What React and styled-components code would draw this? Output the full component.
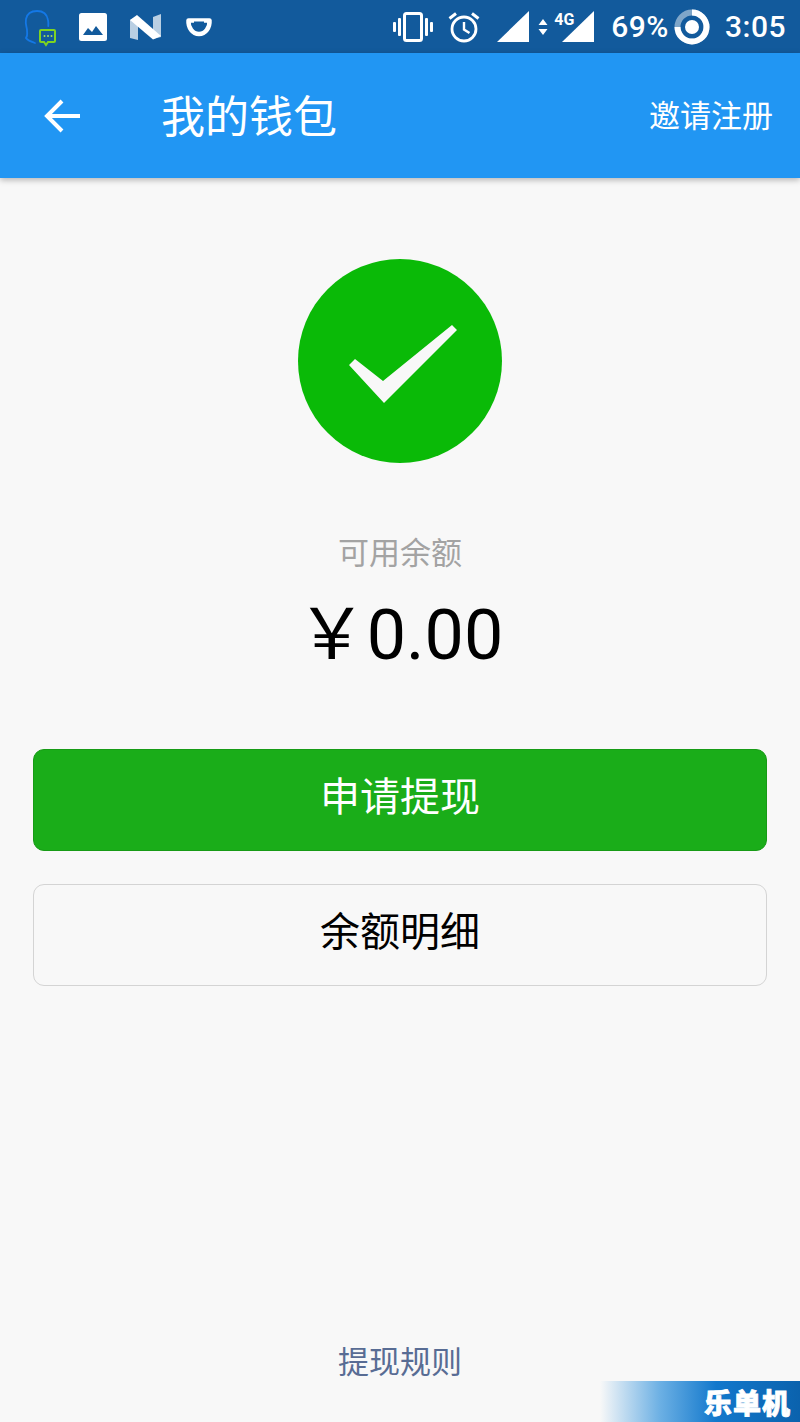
import React from "react";
import styled, { createGlobalStyle } from "styled-components";

const FONT = `Roboto, "Noto Sans CJK SC", sans-serif`;

const GlobalStyle = createGlobalStyle`
  html, body {
    margin: 0;
    padding: 0;
    background: #f8f8f8;
    font-family: ${FONT};
  }
`;

const QqIcon = () => (
  <svg width="38" height="48" viewBox="0 0 38 48" fill="none">
    <path
      d="M16 40c-3-1-8-3-9-5 2-2 1-5 1-8 0-3-2-5-1-11C8 11 12 8 18 8s10 3 11 9c.4 2 .5 3 .3 6"
      stroke="#1478e6"
      strokeWidth="1.8"
      strokeLinecap="round"
    />
    <path
      d="M22 27h13a1 1 0 0 1 1 1v10a1 1 0 0 1-1 1h-6l-2 3-2-3h-3a1 1 0 0 1-1-1V28a1 1 0 0 1 1-1z"
      fill="#125a9c"
      stroke="#7ed321"
      strokeWidth="2"
    />
    <circle cx="25.500" cy="33" r="1" fill="#a4e05a" />
    <circle cx="29" cy="33" r="1" fill="#a4e05a" />
    <circle cx="32.500" cy="33" r="1" fill="#a4e05a" />
  </svg>
);

const ImageIcon = () => (
  <svg width="28" height="28" viewBox="0 0 28 28">
    <rect width="28" height="28" rx="2.5" fill="#fff" />
    <path d="M4 22l5-7 4 4 4-6 7 9z" fill="#125a9c" />
  </svg>
);

const NougatIcon = () => (
  <svg width="34" height="26" viewBox="0 0 34 26">
    <path d="M1 6l8-4v24l-8-2z" fill="#b9cfe3" />
    <path d="M24 3l8-3v23l-8 2z" fill="#b9cfe3" />
    <path d="M1 6l7-5 24 21-8 3.500z" fill="#fff" />
  </svg>
);

const CupIcon = () => (
  <svg width="28" height="20" viewBox="0 0 28 20" fill="none">
    <path
      d="M3.500 3.500h21c.5 7-4 13.500-10.500 13.500S3 10.500 3.500 3.500z"
      stroke="#fff"
      strokeWidth="4.500"
      strokeLinejoin="round"
    />
    <path d="M9 5.500h10" stroke="#125a9c" strokeWidth="2" />
  </svg>
);

const VibrateIcon = () => (
  <svg width="40" height="30" viewBox="0 0 40 30" fill="#fff">
    <rect x="0" y="10" width="3" height="10" rx="1" />
    <rect x="5" y="6" width="3" height="18" rx="1" />
    <rect x="32" y="6" width="3" height="18" rx="1" />
    <rect x="37" y="10" width="3" height="10" rx="1" />
    <rect x="11.500" y="1.500" width="17" height="27" rx="2" fill="none" stroke="#fff" strokeWidth="3" />
  </svg>
);

const AlarmIcon = () => (
  <svg width="32" height="32" viewBox="0 0 32 32" fill="none" stroke="#fff" strokeWidth="2.800">
    <circle cx="16" cy="18" r="12" />
    <path d="M16 11v7.500l5.500 3.500" strokeWidth="2.400" />
    <path d="M1.500 7.500L8 2.500M30.500 7.500L24 2.500" strokeWidth="3" />
  </svg>
);

const SignalIcon = () => (
  <svg width="32" height="31" viewBox="0 0 32 31">
    <path d="M0 31L32 0v31z" fill="#fff" />
  </svg>
);

const ArrowsIcon = () => (
  <svg width="10" height="16" viewBox="0 0 10 16" fill="#fff">
    <path d="M5 0l4.500 6h-9zM5 16l4.500-6h-9z" />
  </svg>
);

const BatteryIcon = () => (
  <svg width="36" height="36" viewBox="0 0 36 36" fill="none">
    <circle cx="18" cy="18" r="14.500" stroke="#7fa6c9" strokeWidth="6" />
    <path d="M18 3.500A14.500 14.500 0 1 1 3.500 18" stroke="#fff" strokeWidth="6" />
    <circle cx="18" cy="18" r="7" fill="#fff" />
  </svg>
);

const BackArrow = () => (
  <svg width="36" height="36" viewBox="0 0 36 36" fill="none" stroke="#fff" strokeWidth="4">
    <path d="M36 18H3M18 3L3 18l15 15" />
  </svg>
);

const CheckBadge = () => (
  <svg width="204" height="204" viewBox="0 0 204 204">
    <circle cx="102" cy="102" r="102" fill="#0aba07" />
    <path d="M51 106l6-6 28 22 69-56 5 5-73 73z" fill="#f8f8f8" />
  </svg>
);

const App = () => (
  <>
    <GlobalStyle />
    <Page>
      <StatusBar>
        <LeftIcons>
          <QqIcon />
          <ImageIcon />
          <NougatIcon />
          <CupIcon />
        </LeftIcons>
        <RightIcons>
          <StatusSlot>
            <VibrateIcon />
          </StatusSlot>
          <StatusSlot $gap={15}>
            <AlarmIcon />
          </StatusSlot>
          <StatusSlot $gap={17}>
            <SignalIcon />
          </StatusSlot>
          <StatusSlot $gap={9}>
            <ArrowsIcon />
          </StatusSlot>
          <StatusSlot $gap={14}>
            <SignalIcon />
            <NetworkLabel>4G</NetworkLabel>
          </StatusSlot>
          <StatusSlot $gap={17}>
            <StatusText>69%</StatusText>
          </StatusSlot>
          <StatusSlot $gap={5}>
            <BatteryIcon />
          </StatusSlot>
          <StatusSlot $gap={15}>
            <StatusText>3:05</StatusText>
          </StatusSlot>
        </RightIcons>
      </StatusBar>

      <AppBar>
        <BackButton>
          <BackArrow />
        </BackButton>
        <Title>我的钱包</Title>
        <InviteLink>邀请注册</InviteLink>
      </AppBar>

      <Main>
        <BadgeWrap>
          <CheckBadge />
        </BadgeWrap>
        <BalanceLabel>可用余额</BalanceLabel>
        <BalanceValue>{"\uFFE5"}0.00</BalanceValue>
        <Actions>
          <ActionButton $primary>申请提现</ActionButton>
          <ActionButton>余额明细</ActionButton>
        </Actions>
      </Main>

      <RulesLink>提现规则</RulesLink>
      <Watermark>乐单机</Watermark>
    </Page>
  </>
);

const Page = styled.div`
  position: relative;
  width: 800px;
  height: 1422px;
  display: flex;
  flex-direction: column;
  background: #f8f8f8;
  overflow: hidden;
`;

const StatusBar = styled.div`
  height: 53px;
  flex: none;
  background: #125a9c;
  display: flex;
  align-items: center;
  justify-content: space-between;
  padding: 0 14px 0 19px;
  color: #fff;
`;

const LeftIcons = styled.div`
  display: flex;
  align-items: center;
  gap: 22px;
`;

const RightIcons = styled.div`
  display: flex;
  align-items: center;
`;

const StatusSlot = styled.div`
  position: relative;
  display: flex;
  align-items: center;
  margin-left: ${(p) => p.$gap || 0}px;
`;

const NetworkLabel = styled.span`
  position: absolute;
  left: -8px;
  top: -1px;
  font-family: Roboto, sans-serif;
  font-size: 16px;
  font-weight: 700;
  color: #fff;
`;

const StatusText = styled.span`
  font-family: Roboto, sans-serif;
  font-size: 30px;
  font-weight: 500;
  color: #fff;
  letter-spacing: 0.5px;
`;

const AppBar = styled.header`
  position: relative;
  height: 125px;
  flex: none;
  background: #2196f3;
  box-shadow: 0 2px 6px rgba(0, 0, 0, 0.28);
  display: flex;
  align-items: center;
  padding: 0 27px 0 44px;
  color: #fff;
`;

const BackButton = styled.div`
  width: 117px;
  display: flex;
`;

const Title = styled.h1`
  margin: 0 0 4px;
  flex: 1;
  font-size: 44px;
  font-weight: 400;
`;

const InviteLink = styled.span`
  margin-bottom: 4px;
  font-size: 31px;
`;

const Main = styled.main`
  display: flex;
  flex-direction: column;
  align-items: center;
  padding: 81px 33px 0;
`;

const BadgeWrap = styled.div`
  display: flex;
  height: 204px;
`;

const BalanceLabel = styled.div`
  margin-top: 68px;
  font-size: 31px;
  line-height: 46px;
  color: #a3a3a3;
`;

const BalanceValue = styled.div`
  margin-top: 17px;
  font-size: 70px;
  line-height: 82px;
  color: #000;
`;

const Actions = styled.div`
  align-self: stretch;
  margin-top: 73px;
  display: flex;
  flex-direction: column;
  gap: 33px;
`;

const ActionButton = styled.div`
  box-sizing: border-box;
  height: 102px;
  padding-bottom: 13px;
  display: flex;
  align-items: center;
  justify-content: center;
  border-radius: 11px;
  border: 1px solid ${(p) => (p.$primary ? "#179b16" : "#d4d4d4")};
  background: ${(p) => (p.$primary ? "#1aad19" : "#f8f8f8")};
  color: ${(p) => (p.$primary ? "#fff" : "#000")};
  font-size: 40px;
`;

const RulesLink = styled.div`
  margin-top: auto;
  margin-bottom: 36px;
  text-align: center;
  font-size: 31px;
  line-height: 46px;
  color: #586c94;
`;

const Watermark = styled.div`
  position: absolute;
  right: 0;
  bottom: 0;
  width: 200px;
  height: 41px;
  box-sizing: border-box;
  padding-right: 9px;
  display: flex;
  align-items: center;
  justify-content: flex-end;
  background: linear-gradient(90deg, rgba(248, 248, 248, 0) 0%, #6cb0e4 30%, #1278cc 58%, #0b62ad 100%);
  color: #fff;
  font-size: 28px;
  font-weight: 900;
  letter-spacing: 1px;
  -webkit-text-stroke: 0.8px #fff;
`;

export default App;
